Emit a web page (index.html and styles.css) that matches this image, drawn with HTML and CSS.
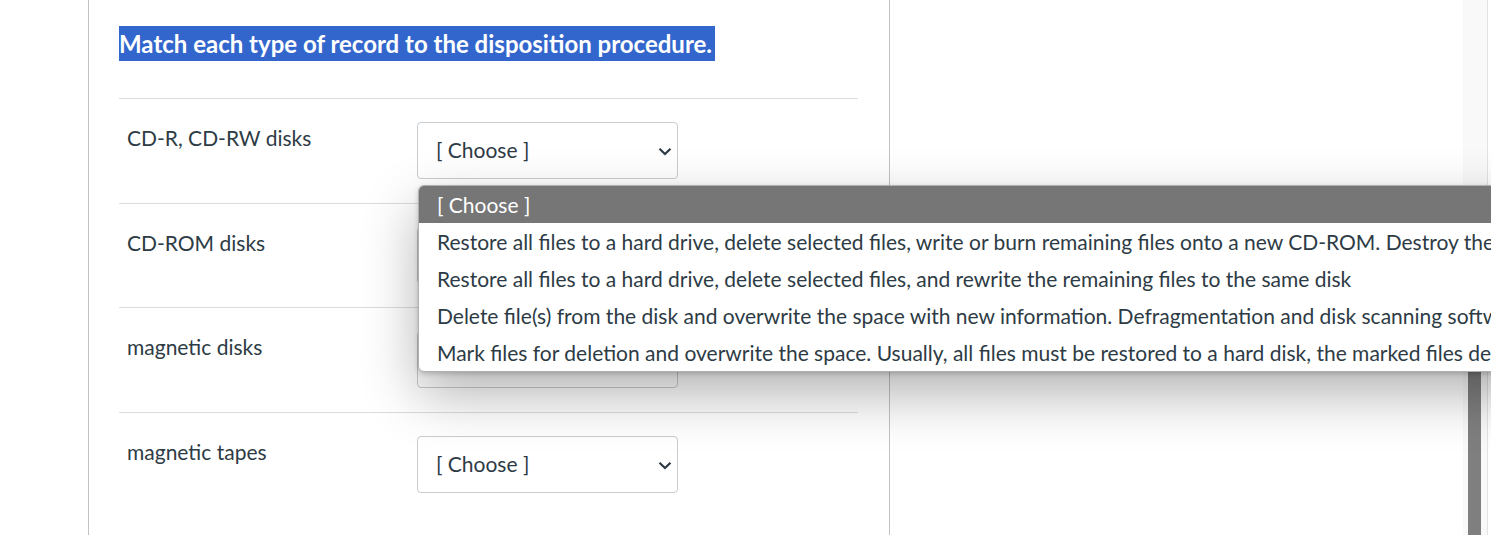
FILE: index.html
```html
<!DOCTYPE html>
<html lang="en">
<head>
    <meta charset="UTF-8">
    <title>Matching question</title>
    <link rel="stylesheet" href="styles.css">
</head>
<body>

<div class="page">
    <div class="gutter"></div>

    <div class="question">
        <h2 class="question-text"><span class="selected">Match each type of record to the disposition procedure.</span></h2>

        <div class="answers">
            <div class="answer-row">
                <div class="answer-label">CD-R, CD-RW disks</div>
                <div class="answer-select open">
                    <div class="select-box">
                        <span>[ Choose ]</span>
                        <svg class="chevron" width="14" height="9" viewBox="0 0 14 9"><path d="M1.5 1.8 L7 7 L12.5 1.8" fill="none" stroke="#2d3b45" stroke-width="2.2"/></svg>
                    </div>
                    <ul class="dropdown">
                        <li class="highlighted">[ Choose ]</li>
                        <li>Restore all files to a hard drive, delete selected files, write or burn remaining files onto a new CD-ROM. Destroy the original disk.</li>
                        <li>Restore all files to a hard drive, delete selected files, and rewrite the remaining files to the same disk</li>
                        <li>Delete file(s) from the disk and overwrite the space with new information. Defragmentation and disk scanning software may be used.</li>
                        <li>Mark files for deletion and overwrite the space. Usually, all files must be restored to a hard disk, the marked files deleted, and the rest rewritten.</li>
                    </ul>
                </div>
            </div>

            <div class="answer-row">
                <div class="answer-label">CD-ROM disks</div>
                <div class="answer-select">
                    <div class="select-box">
                        <span>[ Choose ]</span>
                        <svg class="chevron" width="14" height="9" viewBox="0 0 14 9"><path d="M1.5 1.8 L7 7 L12.5 1.8" fill="none" stroke="#2d3b45" stroke-width="2.2"/></svg>
                    </div>
                </div>
            </div>

            <div class="answer-row">
                <div class="answer-label">magnetic disks</div>
                <div class="answer-select">
                    <div class="select-box">
                        <span>[ Choose ]</span>
                        <svg class="chevron" width="14" height="9" viewBox="0 0 14 9"><path d="M1.5 1.8 L7 7 L12.5 1.8" fill="none" stroke="#2d3b45" stroke-width="2.2"/></svg>
                    </div>
                </div>
            </div>

            <div class="answer-row">
                <div class="answer-label">magnetic tapes</div>
                <div class="answer-select">
                    <div class="select-box">
                        <span>[ Choose ]</span>
                        <svg class="chevron" width="14" height="9" viewBox="0 0 14 9"><path d="M1.5 1.8 L7 7 L12.5 1.8" fill="none" stroke="#2d3b45" stroke-width="2.2"/></svg>
                    </div>
                </div>
            </div>
        </div>
    </div>

    <div class="side"></div>

    <div class="scroll-track">
        <div class="scroll-thumb"></div>
    </div>
    <div class="edge"></div>
</div>

</body>
</html>
```

FILE: styles.css
```css
body {
    margin: 0;
    background-color: #fff;
    font-family: Lato, "Noto Sans", sans-serif;
    color: #2d3b45;
}
.page {
    display: flex;
    height: 535px;
    overflow: hidden;
}
.gutter {
    width: 88px;
    flex-shrink: 0;
}
.question {
    width: 739px;
    flex-shrink: 0;
    border-left: 1px solid #c2c2c2;
    border-right: 1px solid #c2c2c2;
    padding: 26px 31px 0 30px;
}
.question-text {
    margin: 0 0 37px;
    font-size: 24px;
    font-weight: bold;
    line-height: 35px;
    height: 35px;
}
.selected {
    display: inline-block;
    background-color: #3366cc;
    color: #fff;
    padding-right: 3px;
}
.answer-row {
    display: flex;
    border-top: 1px solid #dcdcdc;
    padding: 23px 0 23.7px;
}
.answer-label {
    width: 290px;
    padding: 1px 0 0 8px;
    font-size: 21px;
    line-height: 30px;
}
.answer-select {
    position: relative;
}
.select-box {
    box-sizing: border-box;
    width: 261px;
    height: 57px;
    border: 1px solid #c7cdd1;
    border-radius: 4px;
    padding: 0 5px 3px 18px;
    display: flex;
    align-items: center;
    justify-content: space-between;
    font-size: 21px;
}
.chevron {
    margin-top: 4px;
}
.dropdown {
    position: absolute;
    top: 63px;
    left: 1px;
    z-index: 10;
    width: 1200px;
    margin: 0;
    padding: 0;
    list-style: none;
    background-color: #fff;
    border: 1px solid #b0b0b0;
    border-radius: 6px;
    overflow: hidden;
    box-shadow: 0 22px 55px rgba(0, 0, 0, 0.3), 0 2px 5px rgba(0, 0, 0, 0.18);
}
.dropdown li {
    height: 37px;
    line-height: 37px;
    padding-left: 18px;
    font-size: 21px;
    white-space: nowrap;
}
.dropdown li.highlighted {
    background-color: #767676;
    color: #fff;
}
.side {
    flex: 1;
}
.scroll-track {
    width: 24px;
    flex-shrink: 0;
    background-color: #f9f9f9;
    border-right: 1px solid #e3e3e3;
    display: flex;
    flex-direction: column;
}
.scroll-thumb {
    width: 13px;
    margin: 250px 0 0 5px;
    flex: 1;
    background-color: #7f7f7f;
}
.edge {
    width: 3px;
    flex-shrink: 0;
}
```
